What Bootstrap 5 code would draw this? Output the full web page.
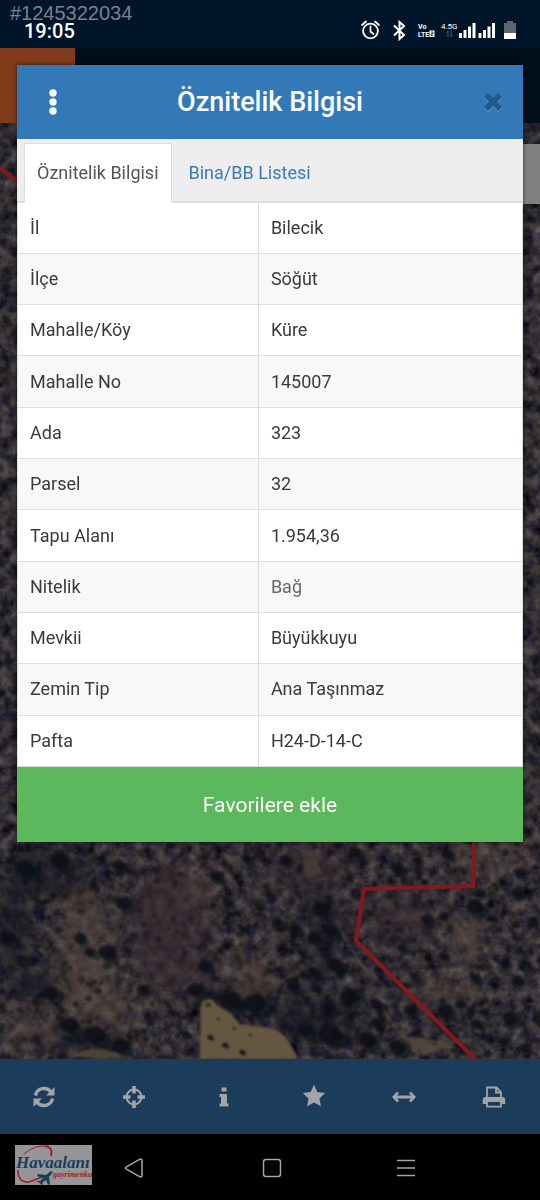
<!DOCTYPE html>
<html lang="tr">
<head>
<meta charset="utf-8">
<meta name="viewport" content="width=device-width, initial-scale=1">
<title>Öznitelik Bilgisi</title>
<link href="https://cdn.jsdelivr.net/npm/bootstrap@5.3.0/dist/css/bootstrap.min.css" rel="stylesheet">
<style>
body { font-family: Roboto, "Noto Sans", sans-serif; font-size: 18px; line-height: 24px; color: #3a3a3a; background: #000; }
button { border: 0; background: transparent; padding: 0; color: inherit; }
.status-bar { height: 48px; background: #00142a; color: #fff; padding: 12px 24px 0; }
.clock { font-size: 20px; font-weight: 500; line-height: 38px; }
.listing-no { left: 10px; top: 1px; font: 20px/24px "Liberation Sans", sans-serif; color: #7c8189; }
.status-icons { height: 36px; }
.map-header { height: 75px; background: #000e1b; }
.map-home { width: 75px; height: 75px; background: #813a1a; }
.map-canvas { min-height: 0; background: #29272a; }
.side-handle { right: 0; top: 96px; width: 17px; height: 60px; background: #808080; z-index: 0; }
.info-dialog { margin: 17px 17px 16px; box-shadow: 0 0 4px rgba(0,0,0,.6); background: #fff; z-index: 1; }
.dialog-head { height: 74px; background: #3379b7; color: #fff; }
.dialog-title { font-size: 27px; line-height: 36px; font-weight: 500; }
.head-btn { width: 75px; height: 74px; padding-right: 3px; }
.head-btn.close-btn { padding: 0 0 2px 15px; color: #22598d; }
.dialog-tabs { height: 64px; background: #eee; border-bottom: 2px solid #ddd; padding: 4px 7px 0; --bs-nav-tabs-border-radius: 0; }
.dialog-tabs .nav-link { height: 60px; padding: 0 12px; color: #3a7ab3; border: 1px solid transparent; margin-bottom: -2px; line-height: 58px; }
.dialog-tabs .nav-item + .nav-item { margin-left: 4px; }
.dialog-tabs .nav-link.active { color: #555; background: #fff; border-color: #ddd #ddd #fff; }
.info-table { height: 564px; table-layout: fixed; --bs-table-color: #3a3a3a; }
.info-table th, .info-table td { font-weight: 400; padding: 0 12px; border: 1px solid #ddd; vertical-align: middle; color: #3a3a3a; }
.info-table tr:first-child > * { border-top: 0; }
.info-table th { width: 47.7%; }
.info-table tr:nth-child(even) > * { background: #f8f8f8; }
.info-table td.faded { color: #686868; }
.fav-btn { height: 75px; background: #5cb85c; color: #fff; font-size: 21px; }
.tool-bar { background: #1b3d5b; color: #a3a4a7; }
.tool-bar button { height: 75px; padding: 0 3px 2px 0; }
.system-nav { height: 66px; padding: 0 12.5%; background: #000; color: #a5a5a5; }
.system-nav button { flex: 1 1 0; }
.agency-logo { left: 15px; top: 11px; }
</style>
</head>
<body>
<div class="d-flex flex-column min-vh-100">
  <header class="status-bar position-relative d-flex justify-content-between">
    <span class="listing-no position-absolute">#1245322034</span>
    <time class="clock">19:05</time>
    <svg class="status-icons" width="160" height="36" viewBox="356 12 160 36" fill="none" stroke="#fff" aria-hidden="true">
      <g stroke-width="1.8" stroke-linecap="round"><circle cx="370.500" cy="31" r="7.400"/><path d="M370.500 26.500v5l3 2.500M362 25l4-3.500M379 25l-4-3.500"/></g>
      <path d="M394 25.500l10 9.500-4.500 4V22l4.500 4-10 9.500" stroke-width="2"/>
      <g fill="#fff" stroke="none" font-family="Roboto" font-weight="700">
        <text x="418" y="29" font-size="7">Vo</text>
        <text x="418" y="37" font-size="7">LTE</text>
        <rect x="429.500" y="30.500" width="5" height="6.500"/>
        <text x="441" y="29" font-size="8" font-weight="400">4.5G</text>
        <path d="M459 33h3v5h-3zM463.500 30h3v8h-3zM468 26.500h3V38h-3zM472.500 23h3v15h-3zM478.500 33h3v5h-3zM483 30h3v8h-3zM487.500 26.500h3V38h-3zM492 23h3v15h-3z"/>
        <path d="M507 21h6v2h3v10h-12V23h3z" fill="#5d6470"/><path d="M504 33h12v6h-12z"/>
      </g>
      <path d="M431 32h2v1.800h-2v1.800h2" stroke="#00142a" stroke-width=".8"/>
      <path d="M448 31v6M446.500 33l1.500-2M451 31v6M452.500 35l-1.500 2" stroke="#4c5968"/>
    </svg>
  </header>

  <main class="position-relative flex-grow-1 d-flex flex-column">
    <div class="position-absolute top-0 start-0 w-100 h-100 d-flex flex-column">
      <div class="map-header"><div class="map-home"></div></div>
      <svg class="map-canvas w-100 flex-grow-1" viewBox="0 123 540 936" preserveAspectRatio="xMidYMax slice" role="img" aria-label="Uydu haritası">
        <defs>
          <filter id="grain" x="0" y="0" width="100%" height="100%" color-interpolation-filters="sRGB"><feTurbulence type="fractalNoise" baseFrequency=".09" numOctaves="4" seed="8"/><feColorMatrix values=".4 .15 0 0 -.085  .36 .16 0 0 -.085  .26 .2 .06 0 -.065  0 0 0 0 1"/></filter>
          <filter id="soft"><feGaussianBlur stdDeviation="11"/></filter>
          <filter id="edge"><feGaussianBlur stdDeviation="1.1"/></filter>
        </defs>
        <rect y="123" width="540" height="936" filter="url(#grain)"/>
        <g filter="url(#soft)">
          <g fill="#6a5546" opacity=".5"><ellipse cx="85" cy="950" rx="24" ry="55"/><ellipse cx="105" cy="1005" rx="40" ry="18"/><ellipse cx="248" cy="973" rx="24" ry="14"/><ellipse cx="195" cy="885" rx="22" ry="18"/><ellipse cx="465" cy="940" rx="18" ry="25"/><ellipse cx="25" cy="1030" rx="35" ry="12"/><ellipse cx="490" cy="860" rx="40" ry="12"/><ellipse cx="448" cy="990" rx="35" ry="10"/></g>
          <g fill="#3a2c2f" opacity=".65"><ellipse cx="170" cy="930" rx="40" ry="70"/><ellipse cx="310" cy="870" rx="40" ry="25"/><ellipse cx="400" cy="920" rx="35" ry="25"/></g>
          <g fill="#0d1722" opacity=".6"><ellipse cx="45" cy="875" rx="55" ry="25"/><ellipse cx="12" cy="930" rx="25" ry="35"/><ellipse cx="35" cy="985" rx="35" ry="18"/><ellipse cx="80" cy="1038" rx="38" ry="18"/><ellipse cx="235" cy="1000" rx="44" ry="15"/><ellipse cx="325" cy="930" rx="20" ry="45"/><ellipse cx="315" cy="1020" rx="45" ry="28"/><ellipse cx="440" cy="1013" rx="25" ry="12"/></g>
        </g>
        <g filter="url(#edge)">
          <path d="M200 1059l1-56q9-8 16 2l15 10 8 10 30 3q15 4 21 18l7 13z" fill="#655743"/>
          <path d="M67 1057q20-9 35-8l16 4 15 6zM398 1035l25 3 22 4 10 6-25 2-2 7-14-12z" fill="#554a39" opacity=".8"/>
          <path d="M300 848l12 4 10 22-16 4z" fill="#504239" opacity=".55"/>
          <path d="M337 920q8 22 18 35 16 20 25 45t35 49" fill="none" stroke="#544a44" stroke-width="2" opacity=".5"/>
          <g id="trees" fill="#0a1016"></g>
        </g>
        <path d="M474 836l-1 50-109 3-8 52 120 119M0 168l20 15" fill="none" stroke="#821a1d" stroke-width="4"/>
      </svg>
    </div>
    <div class="side-handle position-absolute"></div>

    <section class="info-dialog position-relative" aria-labelledby="dialog-title">
      <div class="dialog-head d-flex align-items-center justify-content-between">
        <button type="button" class="head-btn" aria-label="Menü">
          <svg width="8" height="26" viewBox="0 0 8 26" fill="currentColor"><circle cx="4" cy="4" r="3.700"/><circle cx="4" cy="13" r="3.700"/><circle cx="4" cy="22" r="3.700"/></svg>
        </button>
        <h1 class="dialog-title m-0" id="dialog-title">Öznitelik Bilgisi</h1>
        <button type="button" class="head-btn close-btn" aria-label="Kapat">
          <svg width="20" height="20" viewBox="0 0 20 20"><path d="M3 3l14 14M17 3L3 17" stroke="#5d9bd0" stroke-width="5.500" transform="translate(0 1)"/><path d="M3 3l14 14M17 3L3 17" stroke="currentColor" stroke-width="5.500"/></svg>
        </button>
      </div>
      <ul class="dialog-tabs nav nav-tabs">
        <li class="nav-item"><a class="nav-link active" href="#bilgi" aria-current="page">Öznitelik Bilgisi</a></li>
        <li class="nav-item"><a class="nav-link" href="#liste">Bina/BB Listesi</a></li>
      </ul>
      <table class="info-table table mb-0" id="bilgi">
        <tbody>
          <tr><th scope="row">İl</th><td>Bilecik</td></tr>
          <tr><th scope="row">İlçe</th><td>Söğüt</td></tr>
          <tr><th scope="row">Mahalle/Köy</th><td>Küre</td></tr>
          <tr><th scope="row">Mahalle No</th><td>145007</td></tr>
          <tr><th scope="row">Ada</th><td>323</td></tr>
          <tr><th scope="row">Parsel</th><td>32</td></tr>
          <tr><th scope="row">Tapu Alanı</th><td>1.954,36</td></tr>
          <tr><th scope="row">Nitelik</th><td class="faded">Bağ</td></tr>
          <tr><th scope="row">Mevkii</th><td>Büyükkuyu</td></tr>
          <tr><th scope="row">Zemin Tip</th><td>Ana Taşınmaz</td></tr>
          <tr><th scope="row">Pafta</th><td>H24-D-14-C</td></tr>
        </tbody>
      </table>
      <button type="button" class="fav-btn d-block w-100">Favorilere ekle</button>
    </section>
  </main>

  <nav class="tool-bar row row-cols-6 g-0" aria-label="Harita araçları">
    <button type="button" aria-label="Yenile"><svg width="22" height="22" viewBox="0 0 22 22" fill="none" stroke="currentColor" stroke-width="3.400"><path d="M2.500 9.500C4 2 13.500 0 18 6M19.500 12.500C18 20 8.500 22 4 16"/><path d="M21.500 1v8.500H13zM.5 21v-8.500H9z" fill="currentColor" stroke="none"/></svg></button>
    <button type="button" aria-label="Konum"><svg width="22" height="22" viewBox="0 0 22 22" fill="none" stroke="currentColor"><circle cx="11" cy="11" r="7.500" stroke-width="2"/><path d="M11 0v7.500M11 14.500V22M0 11h7.500M14.500 11H22" stroke-width="3.600"/></svg></button>
    <button type="button" aria-label="Bilgi"><svg width="10" height="20" viewBox="0 0 10 20" fill="currentColor"><path d="M2.500.5h5v4h-5zM.5 7H8v9.500h1.500v3H.5v-3H2V10H.5z"/></svg></button>
    <button type="button" aria-label="Favoriler"><svg width="24" height="24" viewBox="0 0 24 24" fill="currentColor"><path d="M12 .8l3.400 7.100 7.800 1.100-5.700 5.400 1.400 7.800-6.900-3.700-6.900 3.700 1.400-7.800L.8 9l7.800-1.100z"/></svg></button>
    <button type="button" aria-label="Ölçüm"><svg width="24" height="12" viewBox="0 0 24 12" fill="none" stroke="currentColor" stroke-width="2.600"><path d="M2 6h20" stroke-width="3"/><path d="M6 1.500L1.700 6 6 10.500M18 1.500L22.300 6 18 10.500"/></svg></button>
    <button type="button" aria-label="Yazdır"><svg width="24" height="22" viewBox="0 0 24 22" fill="none" stroke="currentColor" stroke-width="1.800"><path d="M5 11V1.500h9.500L19 6v5M14 1.500v5h5"/><path d="M.8 18v-4.500q0-2.500 2.500-2.500h17.400q2.500 0 2.500 2.500V18H19v-2H5v2z" fill="currentColor" stroke="none"/><path d="M5 16v4.600h14V16"/></svg></button>
  </nav>

  <nav class="system-nav position-relative d-flex" aria-label="Sistem">
    <svg class="agency-logo position-absolute" width="77" height="40" viewBox="0 0 77 40" role="img" aria-label="Havaalanı gayrimenkul">
      <path d="M0 0h77v40H0z" fill="#969599"/>
      <g fill="none" stroke="#a91a28"><path d="M9 9Q22-2 34 2" stroke-width="1"/><path d="M30 1q8 1 6 10" stroke-width="2"/><path d="M3 25q0 13 11 12l13-5" stroke-width="1.600"/></g>
      <text x="1" y="23" font-family="Liberation Serif" font-style="italic" font-weight="700" font-size="17" fill="#173f58">Havaalanı</text>
      <text x="38" y="32" font-family="Liberation Serif" font-style="italic" font-weight="700" font-size="8" fill="#a91a28">gayrimenku</text>
      <path d="M36 26l-5 4-8-1-1 2 6 2-3 3-4 0 4 2 2 3 1-4 3-2 2 5 2-1-1-7 4-5z" fill="#173f58"/>
    </svg>
    <button type="button" class="pe-1" aria-label="Geri"><svg width="20" height="22" viewBox="0 0 20 22" fill="none" stroke="currentColor" stroke-width="1.500" stroke-linejoin="round"><path d="M2 10.200Q1 11 2 11.800l14 8q2 .8 2-1.300v-15q0-2.100-2-1.300z"/></svg></button>
    <button type="button" aria-label="Ana ekran"><svg width="20" height="20" viewBox="0 0 20 20" fill="none" stroke="currentColor" stroke-width="1.500"><rect x="1.500" y="1.500" width="17" height="17" rx="2.500"/></svg></button>
    <button type="button" aria-label="Son uygulamalar"><svg width="18" height="18" viewBox="0 0 18 18" stroke="currentColor" stroke-width="1.500"><path d="M0 1.500h18M0 9h18M0 16.500h18"/></svg></button>
  </nav>
</div>
<script src="https://cdn.jsdelivr.net/npm/bootstrap@5.3.0/dist/js/bootstrap.bundle.min.js"></script>
<script>
// Tree crowns: the large ones by position [x, y, radius], then a seeded scatter of small shrubs.
const crowns = [[118,865,8],[93,885,5],[124,903,10],[107,952,11],[90,952,7],[80,938,8],[10,938,8],[143,990,8],[205,966,9],[195,990,10],[230,1000,14],[255,1003,14],[247,858,6],[216,876,8],[228,903,7],[120,1046,11],[95,1035,14],[70,1025,11],[50,993,10],[25,868,12],[60,860,12],[285,860,8],[355,852,8],[397,868,8],[417,860,6],[447,854,7],[424,882,5],[519,873,7],[517,892,8],[475,907,11],[480,893,7],[427,919,7],[443,916,5],[296,929,7],[277,922,6],[320,909,10],[315,938,9],[330,930,9],[402,948,6],[443,956,6],[432,966,5],[335,965,10],[293,985,8],[315,974,8],[303,975,5],[377,1005,8],[349,997,12],[328,1008,9],[376,1022,7],[305,1030,10],[330,1035,14],[367,1040,12],[398,1048,10],[378,970,6],[445,1011,10],[460,1004,6],[477,1024,6],[476,978,6],[505,963,5],[522,967,5],[520,950,4],[540,960,5],[502,1041,5],[484,1012,6],[510,1018,10],[410,1010,8],[533,920,6],[491,918,5],[210,1037,4],[225,1045,4],[242,1052,4],[250,1035,2],[234,1028,2],[218,1019,2]];
let seed = 41;
const rnd = () => (seed = (seed * 16807) % 2147483647) / 2147483647;
const dot = (x, y, r, o) => `<ellipse cx="${x}" cy="${y}" rx="${r}" ry="${r * .8}" opacity="${o}"/>`;
let out = crowns.map(([x, y, r]) => dot(x, y, r * .8, .85) + dot(x + r * .5, y + r * .5, r * .7, .5)).join("");
for (let i = 0; i < 1800; i++) {
  const x = rnd() * 540, y = 123 + rnd() * 936, r = 1 + rnd() * 2.5;
  if (y > 1005 && x > 198 && x < 300) continue;
  out += dot(x.toFixed(1), y.toFixed(1), r.toFixed(1), (.3 + rnd() * .5).toFixed(2));
}
document.getElementById("trees").innerHTML = out;
</script>
</body>
</html>
